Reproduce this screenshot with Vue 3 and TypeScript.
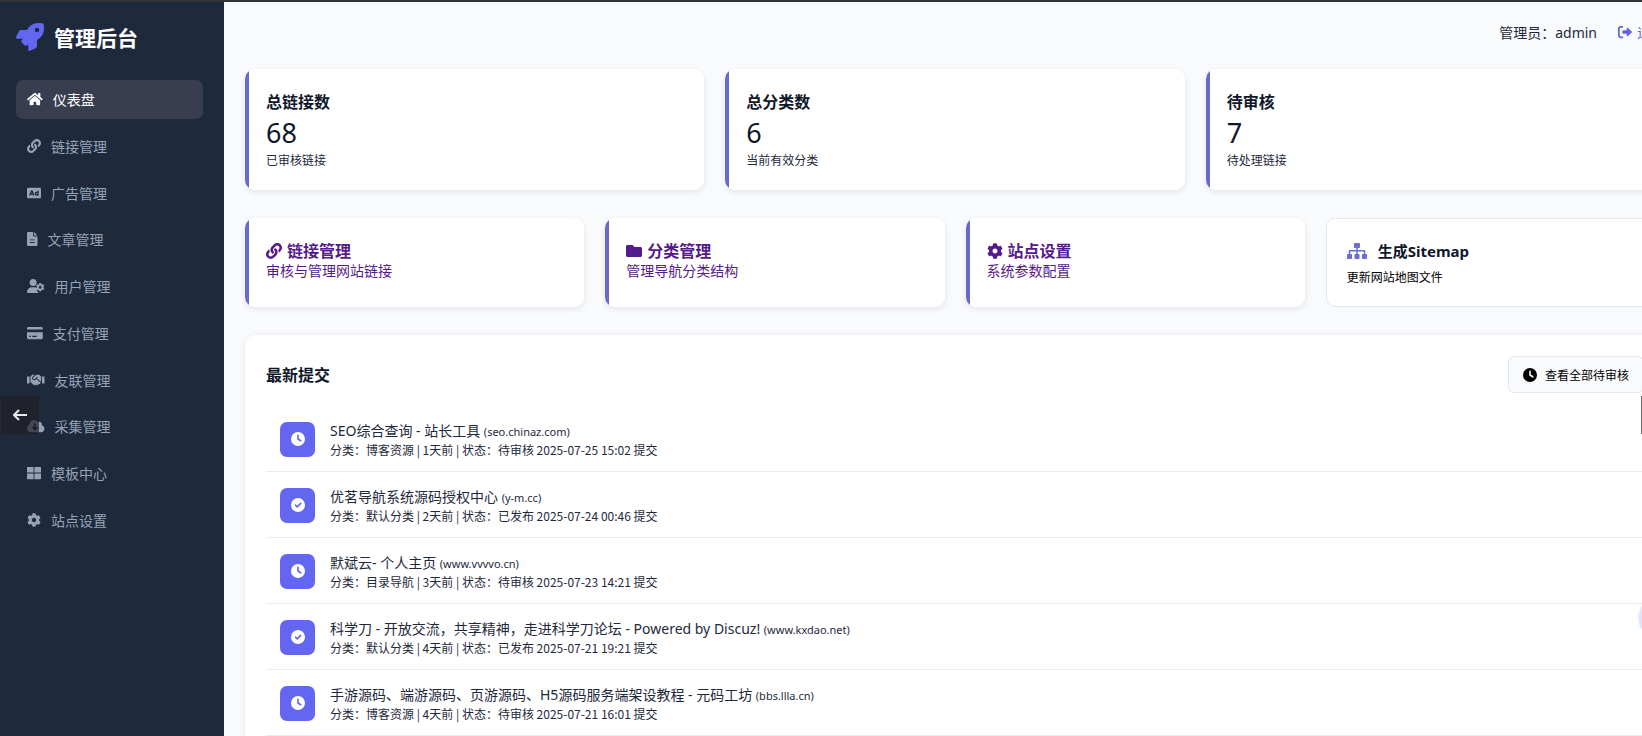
<script setup lang="ts">
interface Icon {
  w: number
  d: string
}

const cog =
  'M487.4 315.7l-42.6-24.6c4.3-23.2 4.3-47 0-70.2l42.6-24.6c4.9-2.8 7.1-8.6 5.5-14-11.1-35.6-30-67.8-54.7-94.6-3.8-4.1-10-5.1-14.8-2.3L380.8 110c-17.9-15.4-38.5-27.3-60.8-35.1V25.8c0-5.6-3.9-10.5-9.4-11.7-36.7-8.2-74.3-7.8-109.2 0-5.5 1.2-9.4 6.1-9.4 11.7V75c-22.2 7.9-42.8 19.8-60.8 35.1L88.7 85.5c-4.9-2.8-11-1.9-14.8 2.3-24.7 26.7-43.6 58.9-54.7 94.6-1.7 5.4.6 11.2 5.5 14L67.3 221c-4.3 23.2-4.3 47 0 70.2l-42.6 24.6c-4.9 2.8-7.1 8.6-5.5 14 11.1 35.6 30 67.8 54.7 94.6 3.8 4.1 10 5.1 14.8 2.3l42.6-24.6c17.9 15.4 38.5 27.3 60.8 35.1v49.2c0 5.6 3.9 10.5 9.4 11.7 36.7 8.2 74.3 7.8 109.2 0 5.5-1.2 9.4-6.1 9.4-11.7v-49.2c22.2-7.9 42.8-19.8 60.8-35.1l42.6 24.6c4.9 2.8 11 1.9 14.8-2.3 24.7-26.7 43.6-58.9 54.7-94.6 1.5-5.5-.7-11.3-5.6-14.1zM256 336c-44.1 0-80-35.9-80-80s35.9-80 80-80 80 35.9 80 80-35.9 80-80 80z'

const icons: Record<string, Icon> = {
  rocket: {
    w: 512,
    d: 'M505.1 19.1c-1.2-5.5-6.7-11-12.2-12.2C460.7 0 435.5 0 410.4 0 307.2 0 245.3 55.2 199.1 128H94.8c-16.3 0-35.6 11.9-42.9 26.5L2.5 253.3A28.4 28.4 0 0 0 0 264a24 24 0 0 0 24 24h103.8l-22.5 22.5c-11.4 11.4-13 32.3 0 45.3l50.9 50.9c11.2 11.2 32.2 13.2 45.3 0l22.5-22.5V488a24 24 0 0 0 24 24 28.6 28.6 0 0 0 10.7-2.5l98.7-49.4c14.6-7.3 26.5-26.5 26.5-42.9V312.8c72.6-46.3 128-108.4 128-211.1.2-25.2.2-50.4-6.8-82.6zM384 168a40 40 0 1 1 40-40 40 40 0 0 1-40 40z',
  },
  home: {
    w: 576,
    d: 'M280.37 148.26L96 300.11V464a16 16 0 0 0 16 16l112.06-.29a16 16 0 0 0 15.92-16V368a16 16 0 0 1 16-16h64a16 16 0 0 1 16 16v95.64a16 16 0 0 0 16 16.05L464 480a16 16 0 0 0 16-16V300L295.67 148.26a12.19 12.19 0 0 0-15.3 0zM571.6 251.47L488 182.56V44.05a12 12 0 0 0-12-12h-56a12 12 0 0 0-12 12v72.61L318.47 43a48 48 0 0 0-61 0L4.34 251.47a12 12 0 0 0-1.6 16.9l25.5 31A12 12 0 0 0 45.15 301l235.22-193.74a12.19 12.19 0 0 1 15.3 0L530.9 301a12 12 0 0 0 16.9-1.6l25.5-31a12 12 0 0 0-1.7-16.93z',
  },
  link: {
    w: 512,
    d: 'M326.612 185.391c59.747 59.809 58.927 155.698.36 214.59-.11.12-.24.25-.36.37l-67.2 67.2c-59.27 59.27-155.699 59.262-214.96 0-59.27-59.26-59.27-155.7 0-214.96l37.106-37.106c9.84-9.84 26.786-3.3 27.294 10.606.648 17.722 3.826 35.527 9.69 52.721 1.986 5.822.567 12.262-3.783 16.612l-13.087 13.087c-28.026 28.026-28.905 73.66-1.155 101.96 28.024 28.579 74.086 28.749 102.325.51l67.2-67.19c28.191-28.191 28.073-73.757 0-101.83-3.701-3.694-7.429-6.564-10.341-8.569a16.037 16.037 0 0 1-6.947-12.606c-.396-10.567 3.348-21.456 11.698-29.806l21.054-21.055c5.521-5.521 14.182-6.199 20.584-1.731a152.482 152.482 0 0 1 20.522 17.197zM467.547 44.449c-59.261-59.262-155.69-59.27-214.96 0l-67.2 67.2c-.12.12-.25.25-.36.37-58.566 58.892-59.387 154.781.36 214.59a152.454 152.454 0 0 0 20.521 17.196c6.402 4.468 15.064 3.789 20.584-1.731l21.054-21.055c8.35-8.35 12.094-19.239 11.698-29.806a16.037 16.037 0 0 0-6.947-12.606c-2.912-2.005-6.64-4.875-10.341-8.569-28.073-28.073-28.191-73.639 0-101.83l67.2-67.19c28.239-28.239 74.3-28.069 102.325.51 27.75 28.3 26.872 73.934-1.155 101.96l-13.087 13.087c-4.35 4.35-5.769 10.79-3.783 16.612 5.864 17.194 9.042 34.999 9.69 52.721.509 13.906 17.454 20.446 27.294 10.606l37.106-37.106c59.271-59.259 59.271-155.699.001-214.959z',
  },
  ad: {
    w: 512,
    d: 'M157.52 272h36.96L176 218.78 157.52 272zM352 256c-13.23 0-24 10.77-24 24s10.77 24 24 24 24-10.77 24-24-10.77-24-24-24zM464 64H48C21.5 64 0 85.5 0 112v288c0 26.5 21.5 48 48 48h416c26.5 0 48-21.5 48-48V112c0-26.5-21.5-48-48-48zM250.58 352h-16.94c-6.81 0-12.88-4.32-15.12-10.75L211.15 320h-70.29l-7.38 21.25A16 16 0 0 1 118.36 352h-16.94c-11.01 0-18.73-10.85-15.12-21.25L140 176.12A23.995 23.995 0 0 1 162.67 160h26.66A23.99 23.99 0 0 1 212 176.13l53.69 154.62c3.61 10.4-4.11 21.25-15.11 21.25zM424 336c0 8.84-7.16 16-16 16h-16c-4.85 0-9.04-2.27-11.98-5.68-8.62 3.66-18.09 5.68-28.02 5.68-39.7 0-72-32.3-72-72s32.3-72 72-72c8.46 0 16.46 1.73 24 4.42V176c0-8.84 7.16-16 16-16h16c8.84 0 16 7.16 16 16v160z',
  },
  file: {
    w: 384,
    d: 'M224 136V0H48C21.500 0 0 21.500 0 48v416c0 26.500 21.500 48 48 48h288c26.500 0 48-21.500 48-48V160H248c-13.200 0-24-10.800-24-24zm64 248c0 8.800-7.200 16-16 16H112c-8.800 0-16-7.200-16-16s7.200-16 16-16h160c8.800 0 16 7.200 16 16zm0-96c0 8.800-7.200 16-16 16H112c-8.800 0-16-7.200-16-16s7.200-16 16-16h160c8.800 0 16 7.200 16 16zM384 128H256V0z',
  },
  user: {
    w: 640,
    d: 'M224 256A128 128 0 1 0 224 0a128 128 0 1 0 0 256zM178 304C80 304 0 384 0 482c0 17 13 30 30 30h396c-28-26-51-60-64-97-5-16-1-33 11-44l13-12-9-8-9-14c-20-21-55-33-98-33zM625 334l-23-13c2-13 2-27 0-40l23-13c5-3 7-8 5-13-7-22-18-41-33-57-4-4-9-5-14-2l-23 13c-10-9-22-16-35-20v-27c0-6-4-10-9-11-22-5-45-5-67 0-5 1-9 5-9 11v27c-13 4-25 11-35 20l-23-13c-5-3-10-2-14 2-15 16-26 35-33 57-2 5 0 10 5 13l23 13c-2 13-2 27 0 40l-23 13c-5 3-7 8-5 13 7 22 18 41 33 57 4 4 9 5 14 2l23-13c10 9 22 16 35 20v27c0 6 4 10 9 11 22 5 45 5 67 0 5-1 9-5 9-11v-27c13-4 25-11 35-20l23 13c5 3 10 2 14-2 15-16 26-35 33-57 2-5 0-10-5-13zM482 352a51 51 0 1 1 0-102 51 51 0 0 1 0 102z',
  },
  card: {
    w: 576,
    d: 'M0 432c0 26.500 21.500 48 48 48h480c26.500 0 48-21.500 48-48V224H0v208zm192-60c0-6.600 5.400-12 12-12h136c6.600 0 12 5.400 12 12v20c0 6.600-5.400 12-12 12H204c-6.600 0-12-5.400-12-12v-20zm-108 0c0-6.600 5.400-12 12-12h32c6.600 0 12 5.400 12 12v20c0 6.600-5.400 12-12 12H96c-6.600 0-12-5.400-12-12v-20zM576 80v48H0V80c0-26.500 21.500-48 48-48h480c26.500 0 48 21.500 48 48z',
  },
  handshake: {
    w: 640,
    d: 'M434.7 64h-85.9c-8 0-15.7 3-21.6 8.4l-98.3 90c-.1.1-.2.3-.3.4-16.6 15.6-16.3 40.5-2.1 56 12.7 13.9 39.4 17.6 56.1 2.7.1-.1.3-.1.4-.2l79.9-73.2c6.5-5.900 16.700-5.500 22.600 1 6 6.500 5.500 16.600-1 22.600l-26.100 23.900L504 313.800c2.900 2.400 5.500 5 7.900 7.700V128l-54.600-54.600c-5.900-6-14.100-9.400-22.600-9.400zM544 128.200v223.900c0 17.700 14.300 32 32 32h64V128.200h-96zM0 384h64c17.700 0 32-14.300 32-32V128.200H0V384zm483.900-45.300L334.600 217.500l-30 27.500c-29.700 27.100-75.200 24.500-101.700-4.400-26.900-29.400-24.800-74.900 4.400-101.700L289.100 64h-83.800c-8.500 0-16.600 3.400-22.600 9.400L128 128v223.900h18.300l90.500 81.900c27.400 22.300 67.700 18.100 90-9.300l.2-.2 17.900 15.500c15.900 13 39.400 10.500 52.300-5.400l31.400-38.600 5.400 4.400c13.700 11.100 33.900 9.100 45-4.700l9.500-11.700c11.200-13.800 9.100-33.900-4.600-45.100z',
  },
  cloud: {
    w: 640,
    d: 'M537.6 226.6c4.1-10.7 6.4-22.4 6.4-34.6 0-53-43-96-96-96-19.7 0-38.1 6-53.3 16.2C367 64.2 315.3 32 256 32c-88.4 0-160 71.6-160 160 0 2.7.1 5.4.2 8.1C40.2 219.8 0 273.2 0 336c0 79.5 64.5 144 144 144h368c70.7 0 128-57.3 128-128 0-61.9-44-113.6-102.4-125.4zm-132.9 88.7L299.3 420.7c-6.2 6.2-16.4 6.2-22.6 0L171.3 315.3c-10.1-10.1-2.9-27.3 11.3-27.3H248V176c0-8.8 7.2-16 16-16h48c8.800 0 16 7.200 16 16v112h65.400c14.200 0 21.400 17.200 11.300 27.300z',
  },
  grid: {
    w: 512,
    d: 'M24 32h216v208H0V56a24 24 0 0 1 24-24zM272 32h216a24 24 0 0 1 24 24v184H272zM0 272h240v208H24a24 24 0 0 1-24-24zM272 272h240v184a24 24 0 0 1-24 24H272z',
  },
  cog: { w: 512, d: cog },
  folder: {
    w: 512,
    d: 'M464 128H272l-64-64H48C21.49 64 0 85.49 0 112v288c0 26.51 21.49 48 48 48h416c26.51 0 48-21.49 48-48V176c0-26.51-21.49-48-48-48z',
  },
  sitemap: {
    w: 640,
    d: 'M128 352H32c-17.67 0-32 14.33-32 32v96c0 17.67 14.33 32 32 32h96c17.67 0 32-14.33 32-32v-96c0-17.67-14.33-32-32-32zm-24-80h192v80h48v-80h192v80h48v-89.59c0-21.17-17.23-38.41-38.41-38.41H344v-64h40c17.67 0 32-14.33 32-32V32c0-17.67-14.33-32-32-32H256c-17.67 0-32 14.33-32 32v96c0 17.67 14.33 32 32 32h40v64H94.41C73.23 224 56 241.23 56 262.41V352h48v-80zm264 80h-96c-17.67 0-32 14.33-32 32v96c0 17.67 14.33 32 32 32h96c17.67 0 32-14.33 32-32v-96c0-17.67-14.33-32-32-32zm240 0h-96c-17.67 0-32 14.33-32 32v96c0 17.67 14.33 32 32 32h96c17.67 0 32-14.33 32-32v-96c0-17.67-14.33-32-32-32z',
  },
  clock: {
    w: 512,
    d: 'M256 0a256 256 0 1 0 0 512a256 256 0 1 0 0-512zM226 120a30 30 0 0 1 60 0v120l86 57a30 30 0 0 1-33 50L240 281a30 30 0 0 1-14-24z',
  },
  check: {
    w: 512,
    d: 'M256 0a256 256 0 1 0 0 512a256 256 0 1 0 0-512zM375 215L247 343c-12 12-30 12-42 0l-66-66a30 30 0 0 1 42-42l45 45 107-107a30 30 0 0 1 42 42z',
  },
  exit: {
    w: 512,
    d: 'M502 278L366 404c-15 14-46 4-46-20v-64H192c-18 0-32-14-32-32v-64c0-18 14-32 32-32h128v-64c0-24 31-34 46-20l136 126c13 12 13 32 0 44zM160 96H96c-18 0-32 14-32 32v256c0 18 14 32 32 32h64a32 32 0 0 1 0 64H96c-53 0-96-43-96-96V128c0-53 43-96 96-96h64a32 32 0 0 1 0 64z',
  },
}

const nav = [
  { icon: 'home', label: '仪表盘' },
  { icon: 'link', label: '链接管理' },
  { icon: 'ad', label: '广告管理' },
  { icon: 'file', label: '文章管理' },
  { icon: 'user', label: '用户管理' },
  { icon: 'card', label: '支付管理' },
  { icon: 'handshake', label: '友联管理' },
  { icon: 'cloud', label: '采集管理' },
  { icon: 'grid', label: '模板中心' },
  { icon: 'cog', label: '站点设置' },
]

const stats = [
  { title: '总链接数', value: 68, note: '已审核链接' },
  { title: '总分类数', value: 6, note: '当前有效分类' },
  { title: '待审核', value: 7, note: '待处理链接' },
]

const shortcuts = [
  { icon: 'link', title: '链接管理', note: '审核与管理网站链接' },
  { icon: 'folder', title: '分类管理', note: '管理导航分类结构' },
  { icon: 'cog', title: '站点设置', note: '系统参数配置' },
]

const rows = [
  { done: false, title: 'SEO综合查询 - 站长工具', host: 'seo.chinaz.com', cat: '博客资源', days: 1, time: '2025-07-25 15:02' },
  { done: true, title: '优茗导航系统源码授权中心', host: 'y-m.cc', cat: '默认分类', days: 2, time: '2025-07-24 00:46' },
  { done: false, title: '默斌云- 个人主页', host: 'www.vvvvo.cn', cat: '目录导航', days: 3, time: '2025-07-23 14:21' },
  { done: true, title: '科学刀 - 开放交流，共享精神，走进科学刀论坛 - Powered by Discuz!', host: 'www.kxdao.net', cat: '默认分类', days: 4, time: '2025-07-21 19:21' },
  { done: false, title: '手游源码、端游源码、页游源码、H5源码服务端架设教程 - 元码工坊', host: 'bbs.llla.cn', cat: '博客资源', days: 4, time: '2025-07-21 16:01' },
]

const box = (name: string) => `0 0 ${icons[name].w} 512`
</script>

<template>
  <div class="viewport">
    <div class="layout">
      <aside class="sidebar">
        <div class="brand">
          <svg class="brand-icon" :viewBox="box('rocket')" aria-hidden="true"><path :d="icons.rocket.d" /></svg>
          <span>管理后台</span>
        </div>
        <nav class="nav">
          <a v-for="(item, i) in nav" :key="item.label" href="#" class="nav-item" :class="{ active: i === 0 }">
            <svg class="icon" :viewBox="box(item.icon)" aria-hidden="true"><path :d="icons[item.icon].d" /></svg>
            <span>{{ item.label }}</span>
          </a>
        </nav>
      </aside>

      <main class="main">
        <header class="topbar">
          <span>管理员：admin</span>
          <a href="#" class="logout">
            <svg class="icon" :viewBox="box('exit')" aria-hidden="true"><path :d="icons.exit.d" /></svg>
            <span>退出</span>
          </a>
        </header>

        <section class="stats">
          <article v-for="s in stats" :key="s.title" class="card">
            <h3 class="title">{{ s.title }}</h3>
            <p class="value">{{ s.value }}</p>
            <p class="note">{{ s.note }}</p>
          </article>
        </section>

        <section class="shortcuts">
          <a v-for="s in shortcuts" :key="s.title" href="#" class="card shortcut">
            <h3 class="title with-icon">
              <svg class="icon" :viewBox="box(s.icon)" aria-hidden="true"><path :d="icons[s.icon].d" /></svg>
              <span>{{ s.title }}</span>
            </h3>
            <p class="desc">{{ s.note }}</p>
          </a>
          <button type="button" class="sitemap">
            <span class="sitemap-title">
              <svg class="icon" :viewBox="box('sitemap')" aria-hidden="true"><path :d="icons.sitemap.d" /></svg>
              <span>生成Sitemap</span>
            </span>
            <span class="sitemap-note">更新网站地图文件</span>
          </button>
        </section>

        <section class="panel">
          <div class="panel-head">
            <h3 class="title">最新提交</h3>
            <button type="button" class="more">
              <svg class="icon" :viewBox="box('clock')" aria-hidden="true"><path :d="icons.clock.d" /></svg>
              <span>查看全部待审核</span>
            </button>
          </div>
          <ul class="list">
            <li v-for="r in rows" :key="r.host" class="row">
              <span class="badge">
                <svg class="icon" viewBox="0 0 512 512" aria-hidden="true">
                  <path :d="r.done ? icons.check.d : icons.clock.d" />
                </svg>
              </span>
              <div>
                <p class="row-title">{{ r.title }} <small>({{ r.host }})</small></p>
                <p class="row-meta">
                  分类：{{ r.cat }} | {{ r.days }}天前 | 状态：{{ r.done ? '已发布' : '待审核' }} {{ r.time }} 提交
                </p>
              </div>
            </li>
          </ul>
        </section>
      </main>
    </div>

    <button type="button" class="prev" aria-label="上一张">
      <svg viewBox="0 0 14 12" aria-hidden="true"><path d="M6 1L1 6l5 5M1 6h13" /></svg>
    </button>
    <span class="next-edge"></span>
    <span class="float-dot"></span>
  </div>
</template>

<style>
body {
  background: #f9fafc;
}
</style>

<style scoped>
.viewport {
  position: relative;
  height: 100vh;
  overflow: hidden;
  box-sizing: border-box;
  border-top: 2px solid #333436;
  font-family: "Noto Sans", "Noto Sans CJK SC", sans-serif;
  font-size: 14px;
  color: #1e293b;
}
.layout {
  display: flex;
  width: calc(100% + 44px);
  min-height: 100%;
}
p,
h3,
ul {
  margin: 0;
  padding: 0;
}
a {
  text-decoration: none;
}
button {
  font-family: inherit;
  color: #000;
}
.icon {
  flex: none;
  height: 14px;
  fill: currentColor;
}

.sidebar {
  flex: none;
  box-sizing: border-box;
  width: 224px;
  padding: 16px 21px 16px 16px;
  background: #1e293b;
}
.brand {
  display: flex;
  align-items: center;
  gap: 10px;
  height: 38px;
  margin-bottom: 24px;
  font-size: 21px;
  font-weight: 700;
  color: #fff;
}
.brand-icon {
  width: 28px;
  height: 28px;
  fill: #6366f1;
}
.nav {
  display: grid;
  grid-auto-rows: 1fr;
  gap: 8px;
  height: 459px;
}
.nav-item {
  display: flex;
  align-items: center;
  gap: 10px;
  padding: 0 11px;
  border-radius: 7px;
  color: #94a3b8;
}
.nav-item.active {
  background: #383e4f;
  color: #fff;
}

.main {
  flex: 1;
  min-width: 0;
  padding: 0 21px;
  background: #f9fafc;
}
.topbar {
  display: flex;
  justify-content: flex-end;
  align-items: center;
  gap: 21px;
  height: 60px;
  margin-bottom: 7px;
}
.logout {
  display: flex;
  align-items: center;
  gap: 5px;
  color: #6366d1;
}
.stats,
.shortcuts {
  display: grid;
  grid-template-columns: repeat(3, 1fr);
  gap: 21px;
  margin-bottom: 28px;
}
.shortcuts {
  grid-template-columns: repeat(4, 1fr);
}
.card {
  padding: 21px;
  border-radius: 10px;
  background: linear-gradient(to right, #666acb 4px, #fff 4px);
  box-shadow: 0 2px 6px rgba(15, 23, 42, 0.09);
}
.title {
  font-size: 16px;
  line-height: 24px;
  font-weight: 700;
  color: #0f172a;
}
.value {
  font-size: 27px;
  line-height: 38px;
  color: #0f172a;
}
.note {
  font-size: 12px;
  line-height: 17px;
}
.shortcut,
.shortcut .title {
  color: #551a8b;
}
.with-icon {
  display: flex;
  align-items: center;
  gap: 5px;
}
.with-icon .icon,
.sitemap-title .icon {
  height: 16px;
}
.desc {
  font-size: 14px;
  line-height: 16px;
}
.sitemap {
  padding: 20px;
  border: 1px solid #e2e8f0;
  border-radius: 9px;
  background: #fff;
  text-align: left;
}
.sitemap-title {
  display: flex;
  align-items: center;
  gap: 11px;
  margin-bottom: 6px;
  font-size: 15px;
  line-height: 24px;
  font-weight: 700;
  color: #0f172a;
}
.sitemap-title .icon {
  color: #6b6ed6;
}
.sitemap-note {
  display: block;
  font-size: 12px;
  line-height: 17px;
}

.panel {
  padding: 21px;
  border-radius: 10px;
  background: #fff;
  box-shadow: 0 1px 6px rgba(15, 23, 42, 0.09);
}
.panel-head {
  display: flex;
  justify-content: space-between;
  align-items: center;
  margin-bottom: 13px;
}
.more {
  display: flex;
  align-items: center;
  gap: 8px;
  height: 37px;
  padding: 0 14px;
  border: 1px solid #e2e8f0;
  border-radius: 6px;
  background: #f8fafc;
  font-size: 12px;
}
.list {
  list-style: none;
}
.row {
  display: flex;
  align-items: center;
  gap: 15px;
  padding: 14px 14px 13px;
  border-bottom: 1px solid #eaecef;
}
.badge {
  display: grid;
  place-items: center;
  width: 35px;
  height: 35px;
  border-radius: 7px;
  background: #6366f1;
  color: #fff;
}
.row-title {
  font-size: 14px;
  line-height: 22px;
}
.row-title small {
  font-size: 11px;
  line-height: 16px;
}
.row-meta {
  font-family: "Noto Sans CJK SC", sans-serif;
  font-size: 12px;
  line-height: 16px;
}

.prev {
  position: absolute;
  left: 1px;
  top: 394px;
  display: grid;
  place-items: center;
  width: 38px;
  height: 38px;
  padding: 0;
  border: 0;
  background: rgba(31, 31, 36, 0.7);
}
.prev svg {
  width: 14px;
  height: 12px;
  fill: none;
  stroke: #e8e8ea;
  stroke-width: 2;
}
.next-edge {
  position: absolute;
  right: 0;
  top: 394px;
  width: 1px;
  height: 38px;
  background: #6b6b6e;
}
.float-dot {
  position: absolute;
  right: -37px;
  top: 596px;
  width: 40px;
  height: 40px;
  border-radius: 50%;
  background: #dfe3fa;
  box-shadow: 0 0 3px rgba(99, 102, 241, 0.25);
}
</style>
